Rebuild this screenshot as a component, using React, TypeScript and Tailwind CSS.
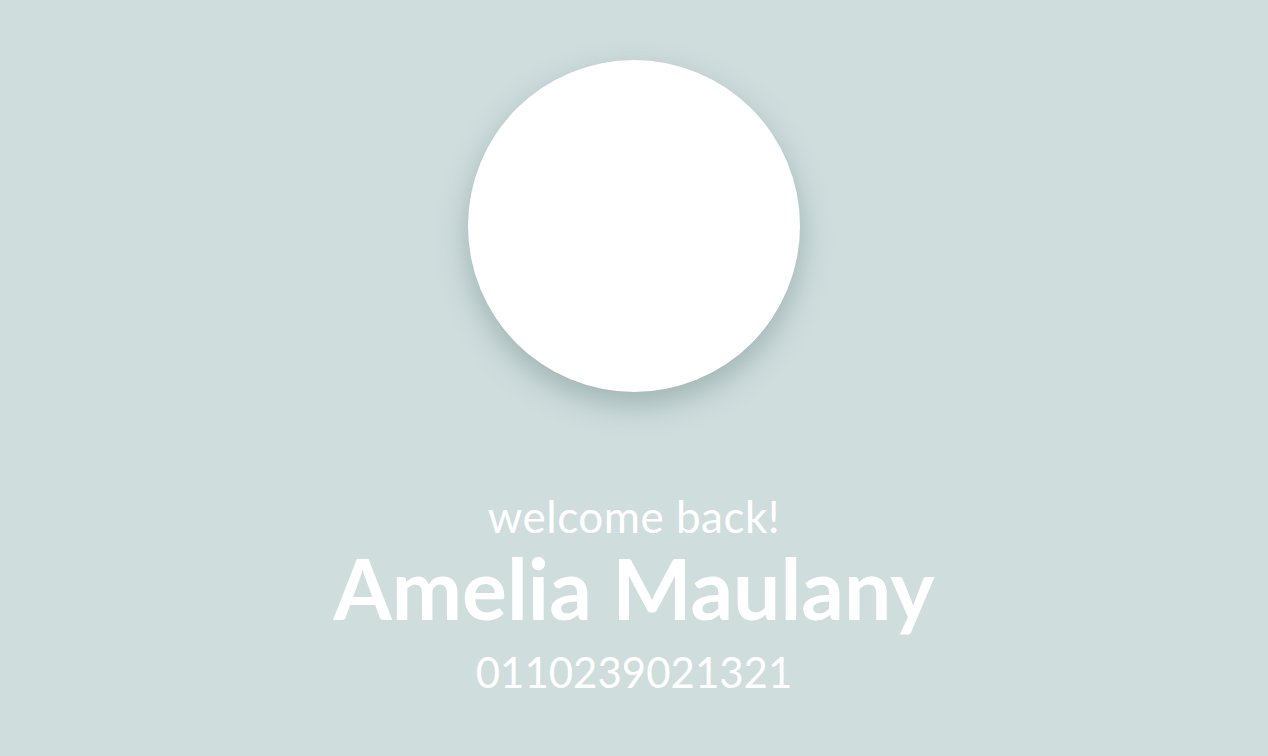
export default function App() {
  return (
    <div className="min-h-screen w-full bg-[#cfdddd] flex flex-col items-center font-['Lato',sans-serif] text-white">
      {/* avatar */}
      <div className="mt-[60px] w-[332px] h-[332px] rounded-full bg-white shadow-[0_12px_30px_rgba(70,100,100,0.35)]" />

      <div className="mt-[102px] flex flex-col items-center">
        <p className="text-[44px] leading-[44px] tracking-[0.5px]">welcome back!</p>
        <h1 className="text-[84px] leading-[100px] font-bold">Amelia Maulany</h1>
        <p className="text-[42px] leading-[50px] mt-[9px]">0110239021321</p>
      </div>
    </div>
  )
}
